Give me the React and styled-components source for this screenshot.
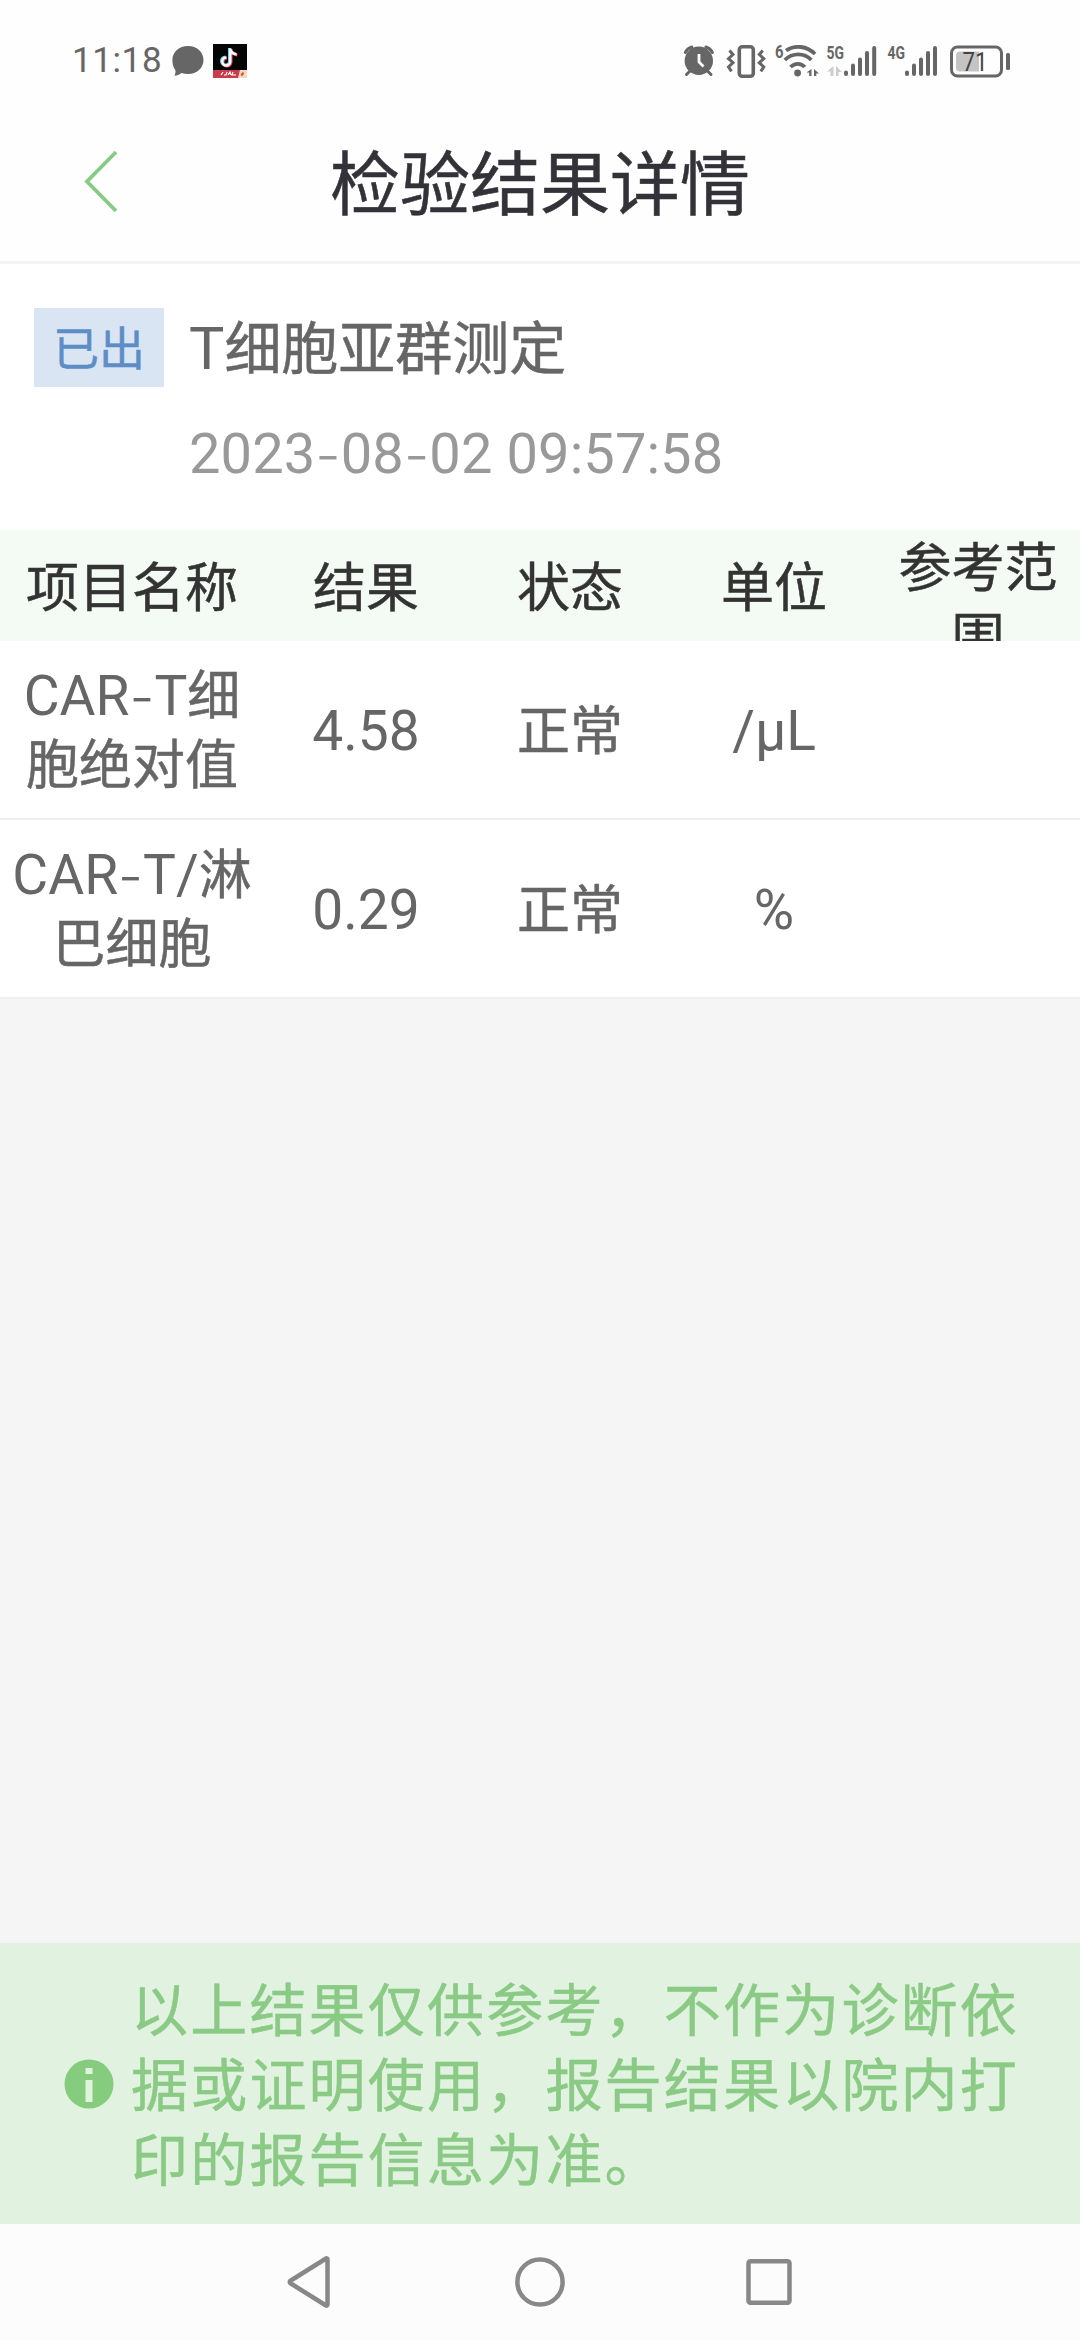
// Core
import React from "react";
import styled, { createGlobalStyle } from "styled-components";

const columns = ["项目名称", "结果", "状态", "单位", "参考范围"];

const rows = [
  { name: ["CAR-T细", "胞绝对值"], result: "4.58", status: "正常", unit: "/μL" },
  { name: ["CAR-T/淋", "巴细胞"], result: "0.29", status: "正常", unit: "%" },
];

// Hyphens get their own, wider glyph
const withDashes = (text) =>
  text
    .split(/(-)/)
    .map((part, i) => (part === "-" ? <Dash key={i}>-</Dash> : part));

// Latin runs are set slightly larger than the Chinese text around them
const Mixed = ({ children }) =>
  children
    .split(/([\x20-\x7eμ]+)/)
    .filter(Boolean)
    .map((part, i) =>
      /^[\x20-\x7eμ]/.test(part) ? (
        <Latin key={i}>{withDashes(part)}</Latin>
      ) : (
        part
      )
    );

const StatusBar = () => (
  <Status>
    <Clock>11:18</Clock>
    <svg width="32" height="32" viewBox="172 45 32 32">
      <path
        d="M188 46c8.800 0 15.500 6 15.500 14s-6.700 14-15.500 14c-2.300 0-4.500-.4-6.400-1.100-2.200 1.600-4.700 2.700-7.200 2.900.9-1.800 1.300-3.700 1-5.600-2-2.600-3-6-3-10.200 0-8 6.800-14 15.600-14z"
        fill="#666"
      />
    </svg>
    <AppBadge width="34" height="34" viewBox="0 0 34 34">
      <rect width="34" height="34" fill="#050505" />
      <g fill="none" strokeWidth="3">
        <path d="M16.500 4v13a4 4 0 1 1-4-4M16.500 4.500c.6 3 3 5 6.300 5.400" stroke="#5fdfe2" />
        <path d="M18 5v13a4 4 0 1 1-4-4M18 5.500c.6 3 3 5 6.300 5.400" stroke="#e8476a" />
        <path d="M17.300 4.500v13a4 4 0 1 1-4-4M17.300 5c.6 3 3 5 6.300 5.400" stroke="#fff" strokeWidth="2.400" />
      </g>
      <rect y="26" width="34" height="8" fill="#c93c4c" />
      <path d="M27 26h7v8h-9z" fill="#f3d9c0" />
      <path d="M8 31l2-3M11 31h2l1-3M15 31l2-3 1 3M20 28l-1 3h4" stroke="#fff" strokeWidth="1.200" fill="none" />
      <path d="M30 27.500l1 2.500-2 2.500-1.500-2z" fill="#cf5a4c" />
    </AppBadge>
    <Spacer />
    <svg width="343" height="40" viewBox="683 41 343 40" fill="#666">
      {/* alarm */}
      <circle cx="698.800" cy="60.700" r="14.200" />
      <path
        d="M685.300 52.500a11 11 0 0 1 6.500-5.500M712.400 52.500a11 11 0 0 0-6.500-5.500M690 71l-3.500 3.500M707.500 71l3.500 3.500"
        stroke="#666"
        strokeWidth="3"
        strokeLinecap="round"
        fill="none"
      />
      <path d="M699 54v8l4.500 4.500" stroke="#fff" strokeWidth="2.800" fill="none" />
      {/* vibrate */}
      <rect x="739.300" y="46.800" width="14" height="29.500" rx="3" fill="none" stroke="#666" strokeWidth="3.600" />
      <path
        d="M729.500 50.500l3.500 4-4.500 4.200 4.500 4-4.500 4.200 3 4.500M762.800 50.500l-3.500 4 4.500 4.200-4.500 4 4.500 4.200-3 4.500"
        stroke="#666"
        strokeWidth="3"
        fill="none"
      />
      {/* wifi */}
      <SvgText x="775" y="58" $size={18} textLength="8.500" lengthAdjust="spacingAndGlyphs">6</SvgText>
      <g fill="none" stroke="#666" strokeWidth="3.800">
        <path d="M786 50.500c9-6 21-4.500 29 3.500" />
        <path d="M784.800 60c7.500-7.500 19.500-7.500 26.500 0" />
        <path d="M790.500 67c4.300-4.300 10.500-4.300 14.300 0" />
      </g>
      <circle cx="797.600" cy="73" r="3.400" />
      <path d="M811.500 69v7h-2.300v-3.500h-2.700zM814 69v7h2.300v-2.500h2.700z" />
      {/* first sim */}
      <SvgText x="826.500" y="59" $size={18.5} textLength="17.500" lengthAdjust="spacingAndGlyphs">5G</SvgText>
      <path d="M833.500 66v10h-3v-4.500h-3.500zM836 66v10h2.500v-4h3.500z" fill="#ccc" />
      <g stroke="#666" strokeWidth="4" strokeLinecap="round">
        <path d="M846 72.500v1.600M853 65.500v8.600M860 59.500v14.600M867 53v21.100M874.200 48v26.100" />
        <path d="M907 72.500v1.600M914 65.500v8.600M921 59.500v14.600M928 53v21.100M935 48v26.100" />
      </g>
      {/* second sim */}
      <SvgText x="887.500" y="59" $size={18.5} textLength="17.500" lengthAdjust="spacingAndGlyphs">4G</SvgText>
      {/* battery */}
      <rect x="951.500" y="47" width="50" height="29" rx="6" fill="none" stroke="#666" strokeWidth="3" />
      <path d="M960 51.500h19v20h-19a4 4 0 0 1-4-4v-12a4 4 0 0 1 4-4z" fill="#c4c4c4" />
      <rect x="1006" y="53" width="4" height="17" rx="1.500" />
      <SvgText x="962.500" y="70.500" $size={25} $tone="#444" $normal textLength="25" lengthAdjust="spacingAndGlyphs">
        71
      </SvgText>
    </svg>
  </Status>
);

const App = () => (
  <>
    <GlobalStyle />
    <Screen>
      <StatusBar />
      <Header>
        <BackIcon width="36" height="66" viewBox="0 0 36 66">
          <path d="M33 3L4 32.500 33 62" fill="none" stroke="#86cb83" strokeWidth="3.800" />
        </BackIcon>
        <Title>检验结果详情</Title>
      </Header>
      <Summary>
        <Badge>已出</Badge>
        <div>
          <TestName>
            <Mixed>T细胞亚群测定</Mixed>
          </TestName>
          <TestDate>{withDashes("2023-08-02 09:57:58")}</TestDate>
        </div>
      </Summary>
      <TableHead>
        {columns.map((column) => (
          <HeadCell key={column} $wraps={column === "参考范围"}>
            {column}
          </HeadCell>
        ))}
      </TableHead>
      {rows.map(({ name, result, status, unit }) => (
        <Row key={result}>
          <Cell>
            {name.map((line) => (
              <div key={line}>
                <Mixed>{line}</Mixed>
              </div>
            ))}
          </Cell>
          <Cell>
            <Mixed>{result}</Mixed>
          </Cell>
          <Cell>{status}</Cell>
          <Cell>
            <Mixed>{unit}</Mixed>
          </Cell>
          <Cell />
        </Row>
      ))}
      <Spacer />
      <Notice>
        <svg width="50" height="50" viewBox="0 0 50 50">
          <circle cx="25" cy="25" r="24.500" fill="#85cc7f" />
          <path d="M21.500 9h7v6h-7zM21.500 21h7v22h-7z" fill="#dff3dd" />
        </svg>
        <NoticeText>
          以上结果仅供参考，不作为诊断依据或证明使用，报告结果以院内打印的报告信息为准。
        </NoticeText>
      </Notice>
      <NavBar>
        <svg width="50" height="54" viewBox="0 0 50 54">
          <path d="M42.500 4.300v45.400a1 1 0 0 1-1.500.8L5.500 28.300a1.500 1.500 0 0 1 0-2.600L41 3.500a1 1 0 0 1 1.500.8z" />
        </svg>
        <svg width="54" height="54" viewBox="0 0 54 54">
          <circle cx="27" cy="27" r="22.600" />
        </svg>
        <svg width="50" height="54" viewBox="0 0 50 54">
          <rect x="4.500" y="6.300" width="41" height="41.400" rx="2" />
        </svg>
      </NavBar>
    </Screen>
  </>
);

const GlobalStyle = createGlobalStyle`
  * {
    box-sizing: border-box;
  }
  body {
    margin: 0;
    font-family: "Noto Sans CJK SC", sans-serif;
    -webkit-text-stroke-width: 0.5px;
  }
  svg {
    display: block;
    flex: none;
  }
`;

const Screen = styled.div`
  display: flex;
  flex-direction: column;
  width: 1080px;
  height: 2340px;
  overflow: hidden;
  background-color: #f5f5f5;
`;

const Spacer = styled.div`
  flex: 1;
`;

const Status = styled.div`
  display: flex;
  align-items: center;
  height: 102px;
  padding: 20px 54px 0 72px;
  background-color: #fefefe;
  -webkit-text-stroke-width: 0;
`;

const Clock = styled.span`
  width: 100px;
  font-family: Roboto, sans-serif;
  font-size: 35px;
  line-height: 40px;
  letter-spacing: 0.6px;
  color: #666;
`;

const AppBadge = styled.svg`
  margin-inline-start: 9px;
`;

const SvgText = styled.text`
  font-family: Roboto, sans-serif;
  font-size: ${({ $size }) => $size}px;
  font-weight: ${({ $normal }) => ($normal ? 400 : 700)};
  fill: ${({ $tone }) => $tone || "#666"};
`;

const Header = styled.div`
  display: flex;
  align-items: center;
  height: 162px;
  padding-inline-start: 83px;
  border-bottom: 3px solid #f3f3f3;
  background-color: #fefefe;
`;

const BackIcon = styled.svg`
  cursor: pointer;
`;

const Title = styled.h1`
  flex: 1;
  margin: 0;
  padding: 0 119px 4px 0;
  font-weight: 400;
  font-size: 70px;
  line-height: 100px;
  text-align: center;
  color: #333238;
`;

const Summary = styled.div`
  display: flex;
  align-items: flex-start;
  height: 266px;
  padding: 44px 34px 0;
  background-color: #fff;
`;

const Badge = styled.div`
  width: 130px;
  height: 79px;
  margin-inline-end: 25px;
  font-size: 46px;
  line-height: 75px;
  text-align: center;
  color: #5d8dc6;
  background-color: #d9e5f3;
`;

const Latin = styled.span`
  font-family: Roboto, "Noto Sans CJK SC", sans-serif;
  font-size: 1.04em;
  line-height: 1;
  -webkit-text-stroke-width: 0;
`;

const Dash = styled.span`
  font-family: Inter, sans-serif;
  font-weight: 300;
  line-height: 1;
  vertical-align: -2px;
`;

const TestName = styled.div`
  height: 79px;
  font-size: 57px;
  line-height: 73px;
  color: #666;
`;

const TestDate = styled.div`
  margin-top: 27px;
  font-family: Roboto, sans-serif;
  font-size: 56px;
  line-height: 80px;
  letter-spacing: 0.1px;
  white-space: nowrap;
  color: #999;
  -webkit-text-stroke-width: 0;
`;

const TableHead = styled.div`
  display: grid;
  grid-template-columns: 264px repeat(4, 204px);
  grid-template-rows: 111px;
  align-items: center;
  height: 111px;
  overflow: hidden;
  background-color: #f4fbf5;
`;

const HeadCell = styled.div`
  align-self: ${({ $wraps }) => ($wraps ? "start" : "center")};
  margin-top: ${({ $wraps }) => ($wraps ? "-1px" : "0")};
  padding: 0 20px ${({ $wraps }) => ($wraps ? "0" : "4px")};
  font-size: 53px;
  line-height: 70px;
  text-align: center;
  color: #333;
`;

const Row = styled.div`
  display: grid;
  grid-template-columns: 264px repeat(4, 204px);
  align-items: center;
  height: 179px;
  border-bottom: 2px solid #eee;
  background-color: #fff;
`;

const Cell = styled.div`
  padding-bottom: 5px;
  font-size: 53px;
  line-height: 69px;
  text-align: center;
  white-space: nowrap;
  color: #666;
`;

const Notice = styled.div`
  display: flex;
  align-items: center;
  height: 281px;
  padding-inline-start: 64px;
  background-color: #e1f2e0;
`;

const NoticeText = styled.p`
  width: 892px;
  margin: 0 0 0 17px;
  padding-bottom: 4px;
  font-size: 57px;
  line-height: 75px;
  letter-spacing: 2.200px;
  word-break: break-all;
  color: #8aca85;
`;

const NavBar = styled.div`
  display: flex;
  align-items: center;
  justify-content: space-between;
  height: 116px;
  padding: 0 286px 0 285px;
  background-color: #fcfcfc;
  svg {
    fill: none;
    stroke: #888;
    stroke-width: 4.500;
  }
`;

export default App;
